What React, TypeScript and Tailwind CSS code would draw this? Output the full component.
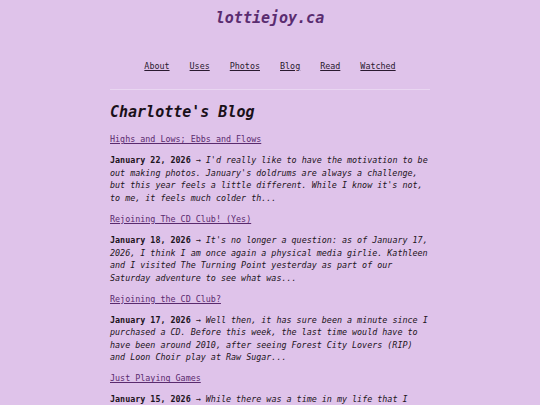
const posts = [
  {
    title: "Highs and Lows; Ebbs and Flows",
    date: "January 22, 2026",
    excerpt:
      "I'd really like to have the motivation to be out making photos. January's doldrums are always a challenge, but this year feels a little different. While I know it's not, to me, it feels much colder th...",
  },
  {
    title: "Rejoining The CD Club! (Yes)",
    date: "January 18, 2026",
    excerpt:
      "It's no longer a question: as of January 17, 2026, I think I am once again a physical media girlie. Kathleen and I visited The Turning Point yesterday as part of our Saturday adventure to see what was...",
  },
  {
    title: "Rejoining the CD Club?",
    date: "January 17, 2026",
    excerpt:
      "Well then, it has sure been a minute since I purchased a CD. Before this week, the last time would have to have been around 2010, after seeing Forest City Lovers (RIP) and Loon Choir play at Raw Sugar...",
  },
  {
    title: "Just Playing Games",
    date: "January 15, 2026",
    excerpt:
      "While there was a time in my life that I would have called myself a gamer, these days I mostly just play whatever feels cosy and easy to pick up...",
  },
];

const navLinks = ["About", "Uses", "Photos", "Blog", "Read", "Watched"];

export default function App() {
  return (
    <div className="min-h-screen bg-[#dfc3ea] text-[#1d1421] font-['DejaVu_Sans_Mono',monospace] text-[8.4px] leading-[12.6px] pb-8">
      {/* Site header */}
      <header className="pt-[7px] text-center">
        <a href="#" className="text-[15px] leading-[22px] font-bold italic text-[#5a2c70]">
          lottiejoy.ca
        </a>
        <nav className="mt-[31px] flex justify-center gap-[20px]">
          {navLinks.map((link) => (
            <a key={link} href="#" className="underline text-[#2a1a30]">
              {link}
            </a>
          ))}
        </nav>
      </header>

      <main className="mx-auto w-[320px]">
        <hr className="mt-[16px] border-0 border-t border-[#e9d6f1]" />

        <h1 className="mt-[11px] text-[15px] leading-[22px] font-bold italic text-[#1a1019]">
          Charlotte's Blog
        </h1>

        <div className="mt-[10.6px]">
          {posts.map((post) => (
            <article key={post.title} className="mb-[8.4px]">
              <a href="#" className="underline text-[#5a2a6e]">
                {post.title}
              </a>
              <p className="mt-[8.4px]">
                <span className="font-bold">{post.date}</span> →{" "}
                <em>{post.excerpt}</em>
              </p>
            </article>
          ))}
        </div>
      </main>
    </div>
  );
}
